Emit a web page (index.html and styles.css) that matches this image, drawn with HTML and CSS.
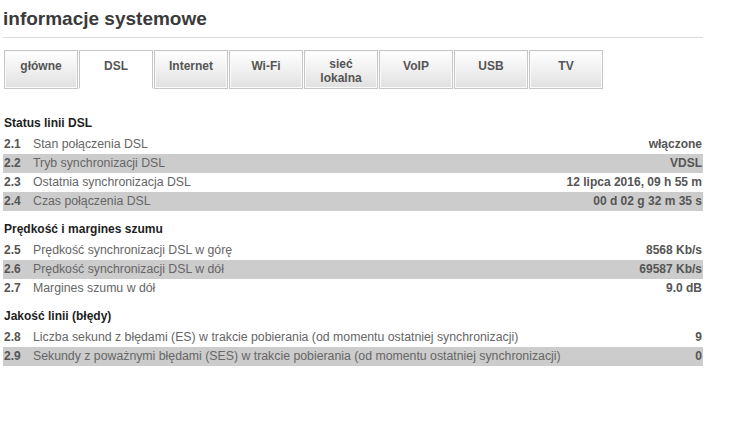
FILE: index.html
```html
<!DOCTYPE html>
<html lang="pl">
<head>
<meta charset="utf-8">
<title>informacje systemowe</title>
<link rel="stylesheet" href="styles.css">
</head>
<body>
<div class="page">
  <h1 class="title">informacje systemowe</h1>
  <div class="tabs">
    <div class="tab">główne</div>
    <div class="tab active">DSL</div>
    <div class="tab">Internet</div>
    <div class="tab">Wi-Fi</div>
    <div class="tab tab-two">sieć<br>lokalna</div>
    <div class="tab">VoIP</div>
    <div class="tab">USB</div>
    <div class="tab">TV</div>
  </div>

  <div class="section first">
    <div class="heading">Status linii DSL</div>
    <div class="row"><span class="num">2.1</span><span class="label">Stan połączenia DSL</span><span class="value">włączone</span></div>
    <div class="row alt"><span class="num">2.2</span><span class="label">Tryb synchronizacji DSL</span><span class="value">VDSL</span></div>
    <div class="row"><span class="num">2.3</span><span class="label">Ostatnia synchronizacja DSL</span><span class="value">12 lipca 2016, 09 h 55 m</span></div>
    <div class="row alt"><span class="num">2.4</span><span class="label">Czas połączenia DSL</span><span class="value">00 d 02 g 32 m 35 s</span></div>
  </div>

  <div class="section">
    <div class="heading">Prędkość i margines szumu</div>
    <div class="row"><span class="num">2.5</span><span class="label">Prędkość synchronizacji DSL w górę</span><span class="value">8568 Kb/s</span></div>
    <div class="row alt"><span class="num">2.6</span><span class="label">Prędkość synchronizacji DSL w dół</span><span class="value">69587 Kb/s</span></div>
    <div class="row"><span class="num">2.7</span><span class="label">Margines szumu w dół</span><span class="value">9.0 dB</span></div>
  </div>

  <div class="section">
    <div class="heading">Jakość linii (błędy)</div>
    <div class="row"><span class="num">2.8</span><span class="label">Liczba sekund z błędami (ES) w trakcie pobierania (od momentu ostatniej synchronizacji)</span><span class="value">9</span></div>
    <div class="row alt"><span class="num">2.9</span><span class="label">Sekundy z poważnymi błędami (SES) w trakcie pobierania (od momentu ostatniej synchronizacji)</span><span class="value">0</span></div>
  </div>
</div>
</body>
</html>
```

FILE: styles.css
```css
* { box-sizing: border-box; }

body {
  margin: 0;
  background: #fff;
  font-family: "Liberation Sans", Arial, sans-serif;
  font-size: 12px;
}

.page {
  width: 703px;
  padding: 8px 0 0 3px;
}

.title {
  margin: 0;
  font-size: 19px;
  line-height: 22px;
  font-weight: bold;
  color: #3a3a3a;
  padding-bottom: 7px;
  border-bottom: 1px solid #dcdcdc;
}

.tabs {
  display: flex;
  margin-top: 12px;
  padding-left: 1px;
}

.tab {
  width: 74px;
  height: 39px;
  margin-right: 1px;
  border: 1px solid #c6c6c6;
  background: linear-gradient(#ffffff 0%, #f2f2f2 45%, #e0e0e0 100%);
  box-shadow: inset 0 0 0 1px #fafafa;
  text-align: center;
  font-weight: bold;
  font-size: 12px;
  color: #555;
  line-height: 14px;
  padding-top: 8px;
}

.tab.tab-two {
  padding-top: 6px;
}

.tab.active {
  background: #fff;
  border-bottom-color: #fff;
  box-shadow: none;
}

.section {
  margin-top: 7px;
}

.section.first {
  margin-top: 23px;
}

.heading {
  height: 23px;
  line-height: 23px;
  font-weight: bold;
  color: #1e1e1e;
  padding-left: 1px;
}

.row {
  display: grid;
  grid-template-columns: 30px 1fr auto;
  height: 19px;
  line-height: 19px;
}

.row.alt {
  background: #cccccc;
}

.num {
  font-weight: bold;
  color: #555;
  padding-left: 1px;
}

.label {
  color: #666;
  font-size: 12.3px;
}

.value {
  font-weight: bold;
  color: #555;
  text-align: right;
  padding-right: 1px;
}
```
